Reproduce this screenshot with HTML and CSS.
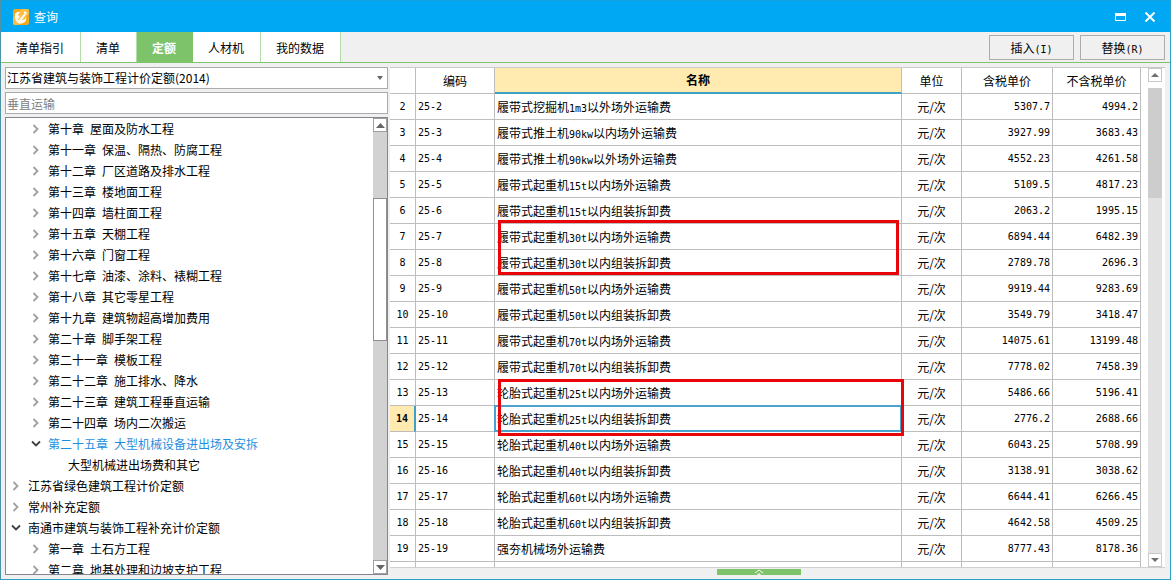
FILE: index.html
```
<!DOCTYPE html>
<html lang="zh-CN">
<head>
<meta charset="utf-8">
<title>查询</title>
<link rel="stylesheet" href="styles.css">
</head>
<body>
<svg class="defs" aria-hidden="true">
  <symbol id="closed" viewBox="0 0 8 10"><path d="M1.5 1 5.500 5 1.500 9" fill="none" stroke="#a0a0a0" stroke-width="1.8"/></symbol>
  <symbol id="open" viewBox="0 0 10 8"><path d="M1 1.500 5 5.500 9 1.500" fill="none" stroke="#404040" stroke-width="1.8"/></symbol>
</svg>
<div class="window">
  <header class="titlebar">
    <svg class="logo" viewBox="0 0 16 16" aria-hidden="true">
      <rect width="16" height="16" rx="2" fill="#f5a81c"/>
      <path d="M0 9 9 0h5q2 0 2 2v3L5 16H2q-2 0-2-2z" fill="#f9bd45"/>
      <path d="M2 5q2-3 5-2L5 6l2 2 5-6 2 2-5 7q3 0 4-3 1 5-3 6-5 2-7-2Q1 8 2 5z" fill="#fff8e6"/>
      <path d="M5 11 11 4" stroke="#f5a81c" stroke-width="1"/>
    </svg>
    <h1 class="title">查询</h1>
    <button class="winbtn" aria-label="最大化"><svg width="11" height="8" viewBox="0 0 11 8"><path d="M.5.500h10v7H.5z" fill="none" stroke="#fff"/><path d="M0 0h11v3H0z" fill="#fff"/></svg></button>
    <button class="winbtn" aria-label="关闭"><svg width="12" height="10" viewBox="0 0 12 10"><path d="M1.500.500l9 9M10.500.500l-9 9" stroke="#fff" stroke-width="2"/></svg></button>
  </header>
  <nav class="toolbar">
    <div class="tabs">
      <button class="tab">清单指引</button><button class="tab">清单</button><button class="tab active">定额</button><button class="tab">人材机</button><button class="tab">我的数据</button>
    </div>
    <div class="actions">
      <button class="action">插入<span class="latin">(I)</span></button>
      <button class="action">替换<span class="latin">(R)</span></button>
    </div>
  </nav>
  <main class="content">
    <section class="side">
      <div class="picker">
        <select class="field" aria-label="定额库"><option>江苏省建筑与装饰工程计价定额(2014)</option></select>
        <svg class="caret" width="6" height="4" viewBox="0 0 6 4" aria-hidden="true"><path d="M0 0h6L3 4z" fill="#666"/></svg>
      </div>
      <input class="field" type="text" placeholder="垂直运输" aria-label="搜索">
      <div class="treebox">
        <ul class="tree">
          <li class="node l2"><button class="toggle" aria-label="展开"><svg width="8" height="10"><use href="#closed"/></svg></button><span>第十章</span><span>屋面及防水工程</span></li>
          <li class="node l2"><button class="toggle" aria-label="展开"><svg width="8" height="10"><use href="#closed"/></svg></button><span>第十一章</span><span>保温、隔热、防腐工程</span></li>
          <li class="node l2"><button class="toggle" aria-label="展开"><svg width="8" height="10"><use href="#closed"/></svg></button><span>第十二章</span><span>厂区道路及排水工程</span></li>
          <li class="node l2"><button class="toggle" aria-label="展开"><svg width="8" height="10"><use href="#closed"/></svg></button><span>第十三章</span><span>楼地面工程</span></li>
          <li class="node l2"><button class="toggle" aria-label="展开"><svg width="8" height="10"><use href="#closed"/></svg></button><span>第十四章</span><span>墙柱面工程</span></li>
          <li class="node l2"><button class="toggle" aria-label="展开"><svg width="8" height="10"><use href="#closed"/></svg></button><span>第十五章</span><span>天棚工程</span></li>
          <li class="node l2"><button class="toggle" aria-label="展开"><svg width="8" height="10"><use href="#closed"/></svg></button><span>第十六章</span><span>门窗工程</span></li>
          <li class="node l2"><button class="toggle" aria-label="展开"><svg width="8" height="10"><use href="#closed"/></svg></button><span>第十七章</span><span>油漆、涂料、裱糊工程</span></li>
          <li class="node l2"><button class="toggle" aria-label="展开"><svg width="8" height="10"><use href="#closed"/></svg></button><span>第十八章</span><span>其它零星工程</span></li>
          <li class="node l2"><button class="toggle" aria-label="展开"><svg width="8" height="10"><use href="#closed"/></svg></button><span>第十九章</span><span>建筑物超高增加费用</span></li>
          <li class="node l2"><button class="toggle" aria-label="展开"><svg width="8" height="10"><use href="#closed"/></svg></button><span>第二十章</span><span>脚手架工程</span></li>
          <li class="node l2"><button class="toggle" aria-label="展开"><svg width="8" height="10"><use href="#closed"/></svg></button><span>第二十一章</span><span>模板工程</span></li>
          <li class="node l2"><button class="toggle" aria-label="展开"><svg width="8" height="10"><use href="#closed"/></svg></button><span>第二十二章</span><span>施工排水、降水</span></li>
          <li class="node l2"><button class="toggle" aria-label="展开"><svg width="8" height="10"><use href="#closed"/></svg></button><span>第二十三章</span><span>建筑工程垂直运输</span></li>
          <li class="node l2"><button class="toggle" aria-label="展开"><svg width="8" height="10"><use href="#closed"/></svg></button><span>第二十四章</span><span>场内二次搬运</span></li>
          <li class="node l2 current"><button class="toggle" aria-label="收起"><svg width="10" height="8"><use href="#open"/></svg></button><span>第二十五章</span><span>大型机械设备进出场及安拆</span></li>
          <li class="node l3"><span>大型机械进出场费和其它</span></li>
          <li class="node"><button class="toggle" aria-label="展开"><svg width="8" height="10"><use href="#closed"/></svg></button><span>江苏省绿色建筑工程计价定额</span></li>
          <li class="node"><button class="toggle" aria-label="展开"><svg width="8" height="10"><use href="#closed"/></svg></button><span>常州补充定额</span></li>
          <li class="node"><button class="toggle" aria-label="收起"><svg width="10" height="8"><use href="#open"/></svg></button><span>南通市建筑与装饰工程补充计价定额</span></li>
          <li class="node l2"><button class="toggle" aria-label="展开"><svg width="8" height="10"><use href="#closed"/></svg></button><span>第一章</span><span>土石方工程</span></li>
          <li class="node l2"><button class="toggle" aria-label="展开"><svg width="8" height="10"><use href="#closed"/></svg></button><span>第二章</span><span>地基处理和边坡支护工程</span></li>
        </ul>
        <div class="scroll dark" aria-hidden="true">
          <div class="arrow"><svg width="9" height="5" viewBox="0 0 9 5"><path d="M0 5h9L4.500 0z" fill="#666"/></svg></div>
          <div class="track"><div class="before"></div><div class="thumb"></div><div class="after"></div></div>
          <div class="arrow"><svg width="9" height="5" viewBox="0 0 9 5"><path d="M0 0h9L4.500 5z" fill="#666"/></svg></div>
        </div>
      </div>
    </section>
    <section class="results">
      <div class="gridbox">
        <div class="gridview">
          <table class="grid">
            <colgroup><col class="c-no"><col class="c-code"><col><col class="c-unit"><col class="c-tax"><col class="c-net"></colgroup>
            <thead><tr><th></th><th>编码</th><th class="sorted">名称</th><th>单位</th><th>含税单价</th><th>不含税单价</th></tr></thead>
            <tbody>
              <tr><td>2</td><td>25-2</td><td>履带式挖掘机<span class="latin">1m3</span>以外场外运输费</td><td>元/次</td><td>5307.7</td><td>4994.2</td></tr>
              <tr><td>3</td><td>25-3</td><td>履带式推土机<span class="latin">90kw</span>以内场外运输费</td><td>元/次</td><td>3927.99</td><td>3683.43</td></tr>
              <tr><td>4</td><td>25-4</td><td>履带式推土机<span class="latin">90kw</span>以外场外运输费</td><td>元/次</td><td>4552.23</td><td>4261.58</td></tr>
              <tr><td>5</td><td>25-5</td><td>履带式起重机<span class="latin">15t</span>以内场外运输费</td><td>元/次</td><td>5109.5</td><td>4817.23</td></tr>
              <tr><td>6</td><td>25-6</td><td>履带式起重机<span class="latin">15t</span>以内组装拆卸费</td><td>元/次</td><td>2063.2</td><td>1995.15</td></tr>
              <tr><td>7</td><td>25-7</td><td>履带式起重机<span class="latin">30t</span>以内场外运输费<i class="mark first"></i></td><td>元/次</td><td>6894.44</td><td>6482.39</td></tr>
              <tr><td>8</td><td>25-8</td><td>履带式起重机<span class="latin">30t</span>以内组装拆卸费</td><td>元/次</td><td>2789.78</td><td>2696.3</td></tr>
              <tr><td>9</td><td>25-9</td><td>履带式起重机<span class="latin">50t</span>以内场外运输费</td><td>元/次</td><td>9919.44</td><td>9283.69</td></tr>
              <tr><td>10</td><td>25-10</td><td>履带式起重机<span class="latin">50t</span>以内组装拆卸费</td><td>元/次</td><td>3549.79</td><td>3418.47</td></tr>
              <tr><td>11</td><td>25-11</td><td>履带式起重机<span class="latin">70t</span>以内场外运输费</td><td>元/次</td><td>14075.61</td><td>13199.48</td></tr>
              <tr><td>12</td><td>25-12</td><td>履带式起重机<span class="latin">70t</span>以内组装拆卸费</td><td>元/次</td><td>7778.02</td><td>7458.39</td></tr>
              <tr><td>13</td><td>25-13</td><td>轮胎式起重机<span class="latin">25t</span>以内场外运输费<i class="mark second"></i></td><td>元/次</td><td>5486.66</td><td>5196.41</td></tr>
              <tr class="selected"><td>14</td><td>25-14</td><td>轮胎式起重机<span class="latin">25t</span>以内组装拆卸费</td><td>元/次</td><td>2776.2</td><td>2688.66</td></tr>
              <tr><td>15</td><td>25-15</td><td>轮胎式起重机<span class="latin">40t</span>以内场外运输费</td><td>元/次</td><td>6043.25</td><td>5708.99</td></tr>
              <tr><td>16</td><td>25-16</td><td>轮胎式起重机<span class="latin">40t</span>以内组装拆卸费</td><td>元/次</td><td>3138.91</td><td>3038.62</td></tr>
              <tr><td>17</td><td>25-17</td><td>轮胎式起重机<span class="latin">60t</span>以内场外运输费</td><td>元/次</td><td>6644.41</td><td>6266.45</td></tr>
              <tr><td>18</td><td>25-18</td><td>轮胎式起重机<span class="latin">60t</span>以内组装拆卸费</td><td>元/次</td><td>4642.58</td><td>4509.25</td></tr>
              <tr><td>19</td><td>25-19</td><td>强夯机械场外运输费</td><td>元/次</td><td>8777.43</td><td>8178.36</td></tr>
              <tr><td></td><td></td><td></td><td></td><td></td><td></td></tr>
            </tbody>
          </table>
        </div>
        <div class="scroll light" aria-hidden="true">
          <div class="arrow"><svg width="8" height="4" viewBox="0 0 8 4"><path d="M0 4h8L4 0z" fill="#707070"/></svg></div>
          <div class="track"><div class="thumb"></div></div>
          <div class="arrow"><svg width="8" height="4" viewBox="0 0 8 4"><path d="M0 0h8L4 4z" fill="#707070"/></svg></div>
        </div>
      </div>
      <div class="drawer"><button class="handle" aria-label="展开面板"><svg width="10" height="6" viewBox="0 0 10 6"><path d="M1 4l4-3 4 3" fill="none" stroke="#fff"/><path d="M3 6l2-2 2 2z" fill="#fff"/></svg></button></div>
    </section>
  </main>
</div>
</body>
</html>
```
FILE: styles.css
```
* { box-sizing: border-box; }
body { margin: 0; font: 12px/20px "Noto Sans CJK SC", sans-serif; color: #000; }
button, input, select { font: inherit; color: inherit; margin: 0; padding: 0; border-radius: 0; }
svg { display: block; }
.defs { position: absolute; width: 0; height: 0; }
.latin { font: 10px/10px "DejaVu Sans Mono", monospace; }

.window {
  display: flex; flex-direction: column; height: 100vh; overflow: hidden;
  background: #f0f0f0; border: 1px solid #2b9fc4; border-top: 0; border-left-color: #4b93a8;
}

.titlebar { display: flex; align-items: center; flex: none; height: 32px; padding: 0 6px 0 12px; background: #00a8f3; border-top: 1px solid #12a0dc; color: #fff; }
.logo { width: 16px; height: 16px; }
.title { flex: 1; margin: 0 0 0 5px; font-size: 12px; font-weight: 400; }
.winbtn { display: grid; place-items: center; width: 29px; height: 24px; border: 0; background: none; }

.toolbar { display: flex; justify-content: space-between; flex: none; height: 31px; border-bottom: 1px solid #7fc36f; }
.tabs { display: flex; }
.tab { padding: 2px 16px 0 15px; border: 0; border-right: 1px solid #b4dca8; background: #fff; }
.tab.active { background: #7dc36a; border-color: #7dc36a; color: #fff; font-weight: 700; }
.actions { display: flex; gap: 6px; padding: 3px 5px 2px 0; }
.action { width: 85px; border: 1px solid #adadad; background: #f0f0f0; }

.content { display: flex; flex: 1; min-height: 0; gap: 2px; padding: 4px 5px 0 4px; }
.side { display: flex; flex-direction: column; flex: none; width: 383px; gap: 3px; padding-bottom: 4px; }
.picker { display: grid; align-items: center; }
.picker > * { grid-area: 1 / 1; }
.caret { justify-self: end; margin-right: 5px; pointer-events: none; }
.field { width: 100%; height: 22px; padding: 0 1px; border: 1px solid #ababab; background: #fff; appearance: none; outline: 0; }
.field::placeholder { color: #808080; opacity: 1; }

.treebox { display: flex; flex: 1; min-height: 0; border: 1px solid #828790; background: #fff; }
.tree { flex: 1; margin: 0; padding: 0; list-style: none; overflow: hidden; }
.node { display: flex; align-items: center; gap: 6px; height: 21px; padding-left: 0; white-space: nowrap; }
.node.l2 { padding-left: 20px; }
.node.l3 { padding-left: 62px; }
.node.current { color: #1e8fe0; }
.toggle { display: grid; place-items: center; width: 16px; height: 16px; padding-left: 3px; border: 0; background: none; }

.scroll { display: flex; flex-direction: column; flex: none; width: 14px; }
.arrow { display: grid; place-items: center; flex: none; height: 14px; border: 1px solid #a0a0a0; background: #fff; }
.track { display: flex; flex-direction: column; flex: 1; }
.dark .track { background: #d2d2d2; }
.dark .before { flex: 66; }
.dark .thumb { flex: 142; border: 1px solid #909090; background: #fff; }
.dark .after { flex: 221; }
.light { width: 14px; margin: 0 3px 0 7px; }
.light .arrow { border-color: #c8c8c8; }
.light .track { margin-top: 6px; background: #e2e2e2; }
.light .thumb { height: 110px; background: #cdcdcd; }

.results { display: flex; flex-direction: column; flex: 1; min-width: 0; }
.gridbox { display: flex; flex: 1; min-height: 0; border-top: 1px solid #c8c8c8; border-bottom: 1px solid #d0d0d0; background: #fff; overflow: hidden; }
.gridview { flex: 1; min-width: 0; overflow: hidden; }
.grid { width: 100%; table-layout: fixed; border-collapse: separate; border-spacing: 0; }
.c-no { width: 26px; }
.c-code { width: 79px; }
.c-unit { width: 60px; }
.c-tax { width: 91px; }
.c-net { width: 88px; }
.grid th, .grid td { height: 26px; padding: 0 2px; border: 0 solid #bdbdbd; border-width: 0 1px 1px 0; white-space: nowrap; line-height: 20px; }
.grid th { font-weight: 400; }
.grid .sorted { background: #ffebb0; border-bottom: 2px solid #3da0c4; font-weight: 700; }
.grid td:nth-child(3) { position: relative; }
.grid td:nth-child(4) { text-align: center; }
.grid td:nth-child(1), .grid td:nth-child(2), .grid td:nth-child(n+5) { font: 10px/20px "DejaVu Sans Mono", monospace; }
.grid td:nth-child(1) { text-align: center; }
.grid td:nth-child(n+5) { text-align: right; }
.grid .selected td:nth-child(1) { background: #ffebb0; border-right: 2px solid #3da0c4; font-weight: 700; }
.selected td:nth-child(3)::before { content: ""; position: absolute; inset: -1px -1px -1px -1px; border: 2px solid #4aa3cc; }
.mark { position: absolute; z-index: 1; left: 3px; border: 3px solid #e80408; }
.mark.first { top: -4px; right: 2px; height: 55px; }
.mark.second { top: -1px; right: -3px; height: 57px; }

.drawer { display: flex; justify-content: center; flex: none; height: 11px; padding: 1px 38px 4px 0; }
.handle { display: grid; place-items: center; width: 84px; height: 6px; border: 0; background: #7dc36a; }
```
